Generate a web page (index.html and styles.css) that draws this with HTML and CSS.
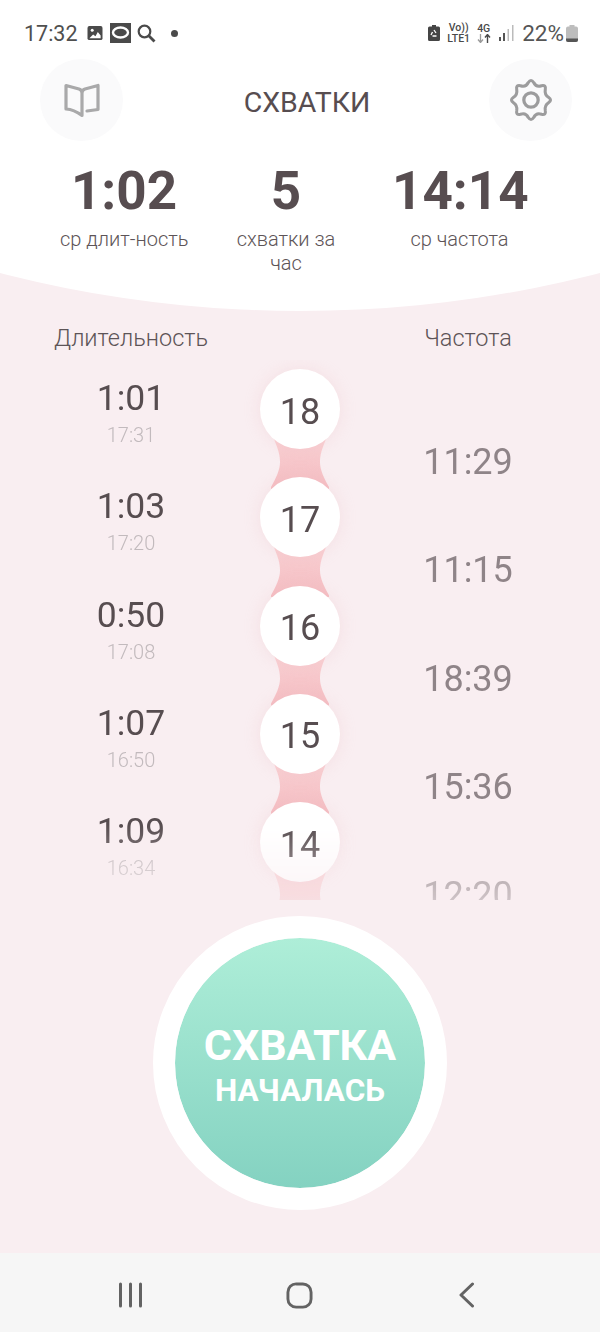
FILE: index.html
```html
<!DOCTYPE html>
<html lang="ru">
<head>
<meta charset="utf-8">
<title>Схватки</title>
<link rel="stylesheet" href="styles.css">
</head>
<body>
<div class="app">
  <header class="hero">
    <div class="status">
      <div class="status-group">
        <span class="clock">17:32</span>
        <svg class="ic-gallery" viewBox="0 0 16 16"><rect x="0" y="0" width="16" height="15" rx="2" fill="#4a4a4a"/><circle cx="5" cy="4.500" r="1.600" fill="#fff"/><path d="M2 13l4-4 2.500 2L11 6.500l3 3.500V13z" fill="#fff"/></svg>
        <svg class="ic-box" viewBox="0 0 21 20"><rect width="21" height="20" fill="#4a4a4a"/><ellipse cx="10.500" cy="9.500" rx="7.500" ry="5" fill="none" stroke="#fff" stroke-width="2.400"/></svg>
        <svg class="ic-search" viewBox="0 0 19 19"><circle cx="7.500" cy="7.500" r="5.800" fill="none" stroke="#4a4a4a" stroke-width="2.200"/><path d="M11.800 11.800L17.500 17.500" stroke="#4a4a4a" stroke-width="2.800"/></svg>
        <span class="dot"></span>
      </div>
      <div class="status-group status-right">
        <svg class="ic-batsave" viewBox="0 0 12 16"><path d="M4 0h4v1.500h2.500q1.500 0 1.500 1.500v11.500q0 1.500-1.500 1.500h-9Q0 16 0 14.500V3q0-1.500 1.500-1.500H4z" fill="#454545"/><path d="M3 10l1.500-3M6 5l2 3M8.500 11H4.500" stroke="#fff" stroke-width="1.300" fill="none"/></svg>
        <span class="net net-lte"><span>Vo))</span><span>LTE1</span></span>
        <span class="net net-4g"><span>4G</span><svg class="ic-arrows" viewBox="0 0 14 9"><path d="M3.500 0v8M1 5.500l2.500 3 2.500-3" fill="none" stroke="#9a9a9a" stroke-width="1.300"/><path d="M10.500 9V1M8 3.500l2.500-3 2.500 3" fill="none" stroke="#4a4a4a" stroke-width="1.400"/></svg></span>
        <svg class="ic-signal" viewBox="0 0 15 18"><rect x="0" y="13" width="2" height="4" fill="#555"/><rect x="4" y="9" width="2" height="8" fill="#555"/><rect x="8.500" y="5" width="1.500" height="12" fill="#bbb"/><rect x="13" y="1" width="1.500" height="16" fill="#bbb"/></svg>
        <span class="pct">22%</span>
        <svg class="ic-battery" viewBox="0 0 12 17"><path d="M3.500 0h5v1.500H10q2 0 2 2V15q0 2-2 2H2q-2 0-2-2V3.500q0-2 2-2h1.500z" fill="#bdbdbd"/><path d="M0 13.500h12V15q0 2-2 2H2q-2 0-2-2z" fill="#555"/></svg>
      </div>
    </div>
    <div class="toolbar">
      <button class="round-btn" aria-label="Книга">
        <svg class="ic-book" viewBox="0 0 38 36"><path d="M3 3.500l13 3.500q3 1 3 4v22.500q-8-6-16-6.500zM19 11q0-3 3-4l13-3.500V27.500l-11 1.500" fill="none" stroke="#a9a9aa" stroke-width="3.200" stroke-linejoin="round" stroke-linecap="round"/></svg>
      </button>
      <h1 class="title">СХВАТКИ</h1>
      <button class="round-btn" aria-label="Настройки">
        <svg class="ic-gear" viewBox="-24 -24 48 48"><path d="M18.250 -2.800Q22.500 0 18.250 2.800Q14 5.600 14.900 11Q15.900 15.900 11 14.900Q5.400 12.900 2.800 18.250Q0 22.500 -2.800 18.250Q-5.400 12.900 -11 14.900Q-15.900 15.900 -14.900 11Q-14 5.600 -18.250 2.800Q-22.500 0 -18.250 -2.800Q-14 -5.600 -14.900 -11Q-15.900 -15.900 -11 -14.900Q-5.400 -12.900 -2.800 -18.250Q0 -22.500 2.800 -18.250Q5.400 -12.900 11 -14.900Q15.900 -15.900 14.900 -11Q14 -5.600 18.250 -2.800Z" fill="none" stroke="#9c9c9d" stroke-width="3.200" stroke-linejoin="round"/><circle r="7.500" fill="none" stroke="#9c9c9d" stroke-width="3.400"/></svg>
      </button>
    </div>
    <div class="stats">
      <div class="stat stat-a"><div class="stat-num">1:02</div><div class="stat-label">ср длит-ность</div></div>
      <div class="stat stat-b"><div class="stat-num">5</div><div class="stat-label">схватки за час</div></div>
      <div class="stat stat-c"><div class="stat-num">14:14</div><div class="stat-label">ср частота</div></div>
    </div>
  </header>

  <main class="content">
    <div class="cols-head">
      <span>Длительность</span>
      <span></span>
      <span class="head-freq">Частота</span>
    </div>
    <div class="list">
      <div class="row">
        <div class="dur"><div class="dur-time">1:01</div><div class="dur-at">17:31</div></div>
        <div class="num-cell"><div class="link"></div><div class="num">18</div></div>
        <div class="freq">11:29</div>
      </div>
      <div class="row">
        <div class="dur"><div class="dur-time">1:03</div><div class="dur-at">17:20</div></div>
        <div class="num-cell"><div class="link"></div><div class="num">17</div></div>
        <div class="freq">11:15</div>
      </div>
      <div class="row">
        <div class="dur"><div class="dur-time">0:50</div><div class="dur-at">17:08</div></div>
        <div class="num-cell"><div class="link"></div><div class="num">16</div></div>
        <div class="freq">18:39</div>
      </div>
      <div class="row">
        <div class="dur"><div class="dur-time">1:07</div><div class="dur-at">16:50</div></div>
        <div class="num-cell"><div class="link"></div><div class="num">15</div></div>
        <div class="freq">15:36</div>
      </div>
      <div class="row">
        <div class="dur"><div class="dur-time">1:09</div><div class="dur-at">16:34</div></div>
        <div class="num-cell"><div class="link"></div><div class="num">14</div></div>
        <div class="freq">12:20</div>
      </div>
    </div>
    <div class="action-wrap">
      <button class="action">
        <span class="action-a">СХВАТКА</span>
        <span class="action-b">НАЧАЛАСЬ</span>
      </button>
    </div>
  </main>

  <nav class="navbar">
    <svg class="ic-recent" viewBox="0 0 25 26"><path d="M2.500 2v22M12.500 2v22M22.500 2v22" stroke="#636363" stroke-width="3" stroke-linecap="round"/></svg>
    <svg class="ic-home" viewBox="0 0 28 28"><rect x="2" y="2" width="24" height="24" rx="8.500" fill="none" stroke="#636363" stroke-width="3"/></svg>
    <svg class="ic-back" viewBox="0 0 17 26"><path d="M14.500 2L3 13l11.500 11" fill="none" stroke="#636363" stroke-width="3" stroke-linecap="round" stroke-linejoin="round"/></svg>
  </nav>
</div>
</body>
</html>
```

FILE: styles.css
```css
* { box-sizing: border-box; }
html, body { margin: 0; padding: 0; }
body { font-family: Roboto, "Liberation Sans", sans-serif; color: #574d50; background: #f9eef1; }
svg { display: block; flex: none; }
button { font: inherit; color: inherit; border: 0; padding: 0; }

.app { width: 600px; height: 1332px; display: flex; flex-direction: column; overflow: hidden; background: #f9eef1; }

.hero { flex: none; height: 311px; background: #fff; clip-path: ellipse(1203px 1203px at 300px -892px); }

.status { height: 59px; padding: 7px 22px 0 24px; display: flex; justify-content: space-between; align-items: center; color: #4f4f4f; }
.status-group { display: flex; align-items: center; }
.clock { font-size: 21.500px; width: 63px; }
.ic-gallery { width: 16px; height: 15px; }
.ic-box { width: 21px; height: 20px; margin-left: 7px; }
.ic-search { width: 19px; height: 19px; margin-left: 6px; }
.dot { width: 7px; height: 7px; border-radius: 50%; background: #4a4a4a; margin-left: 15px; }
.ic-batsave { width: 12px; height: 16px; }
.net { display: flex; flex-direction: column; align-items: center; font-size: 10.500px; line-height: 11px; font-weight: 500; color: #4a4a4a; white-space: nowrap; }
.net-lte { margin-left: 7px; width: 23px; }
.net-4g { margin-left: 6px; width: 15px; }
.ic-arrows { width: 14px; height: 9px; }
.ic-signal { width: 15px; height: 18px; margin-left: 8px; }
.pct { font-size: 22.500px; margin-left: 8px; color: #555; }
.ic-battery { width: 12px; height: 17px; margin-left: 2px; }

.toolbar { height: 82px; padding: 0 28px 0 40px; display: flex; justify-content: space-between; align-items: center; }
.round-btn { width: 83px; height: 82px; border-radius: 50%; background: #fafafb; display: flex; align-items: center; justify-content: center; }
.ic-book { width: 38px; height: 36px; }
.ic-gear { width: 46px; height: 46px; }
.title { margin: 0; padding: 4px 0 0 2px; font-size: 28.500px; font-weight: 400; color: #574d50; }

.stats { display: flex; padding: 20px 0 0 60px; }
.stat { text-align: center; }
.stat-a { width: 128px; }
.stat-b { width: 100px; margin-left: 48px; }
.stat-c { width: 135px; margin-left: 56px; }
.stat-num { font-size: 53px; line-height: 60px; font-weight: 700; color: #574d50; white-space: nowrap; }
.stat-label { margin-top: 6px; font-size: 20px; line-height: 24px; font-weight: 300; color: #5d5457; white-space: nowrap; }
.stat-b .stat-label { white-space: normal; }

.content { flex: 1; min-height: 0; display: flex; flex-direction: column; align-items: stretch; }
.cols-head { display: grid; grid-template-columns: 1fr 80px 1fr; column-gap: 40px; padding: 14px 42px 0; font-size: 23.500px; line-height: 26px; font-weight: 300; color: #5d5457; text-align: center; white-space: nowrap; }
.head-freq { padding-right: 2px; }

.list { height: 540px; margin-top: 9px; overflow: hidden; -webkit-mask-image: linear-gradient(#000 86%, rgba(0,0,0,.4) 100%); mask-image: linear-gradient(#000 86%, rgba(0,0,0,.4) 100%); }
.row { height: 108.250px; display: grid; grid-template-columns: 1fr 80px 1fr; column-gap: 40px; padding: 0 42px; text-align: center; }
.dur { padding-top: 18px; }
.dur-time { font-size: 35.500px; line-height: 40px; color: #574d50; }
.dur-at { margin-top: 5px; font-size: 20px; line-height: 24px; font-weight: 300; color: #c2babd; }
.num-cell { position: relative; padding-top: 9px; }
.num { position: relative; width: 80px; height: 80px; padding-top: 5px; border-radius: 50%; background: #fff; display: flex; align-items: center; justify-content: center; font-size: 36px; color: #574d50; box-shadow: 0 0 16px rgba(240, 190, 195, .3); }
.link { position: absolute; left: 0; top: 79px; width: 80px; height: 50px; background: linear-gradient(#f9d0d3, #f4bcc1); clip-path: path("M14 0C17 8 20 14 20 23C20 31 16 39 11 48V50H69V48C64 39 60 31 60 23C60 14 63 8 66 0Z"); }
.freq { padding: 82px 2px 0 0; font-size: 36px; line-height: 40px; color: #8f8488; white-space: nowrap; }

.action-wrap { display: flex; justify-content: center; padding-top: 16px; }
.action { width: 294px; height: 294px; border-radius: 50%; display: flex; flex-direction: column; align-items: center; justify-content: center; background-clip: padding-box; border: 22px solid #fff; background-color: #fff; background-image: linear-gradient(#aeeed8, #84d2c1); color: #fff; font-weight: 700; padding-top: 6px; }
.action-a { font-size: 43px; line-height: 50px; }
.action-b { font-size: 31.500px; line-height: 36px; margin-top: 3px; margin-bottom: 4px; }

.navbar { flex: none; height: 79px; background: #f6f6f6; display: flex; align-items: center; padding: 5px 125px 0 118px; justify-content: space-between; }
.ic-recent { width: 25px; height: 26px; }
.ic-home { width: 27px; height: 27px; margin-right: 3px; }
.ic-back { width: 17px; height: 26px; }
```
